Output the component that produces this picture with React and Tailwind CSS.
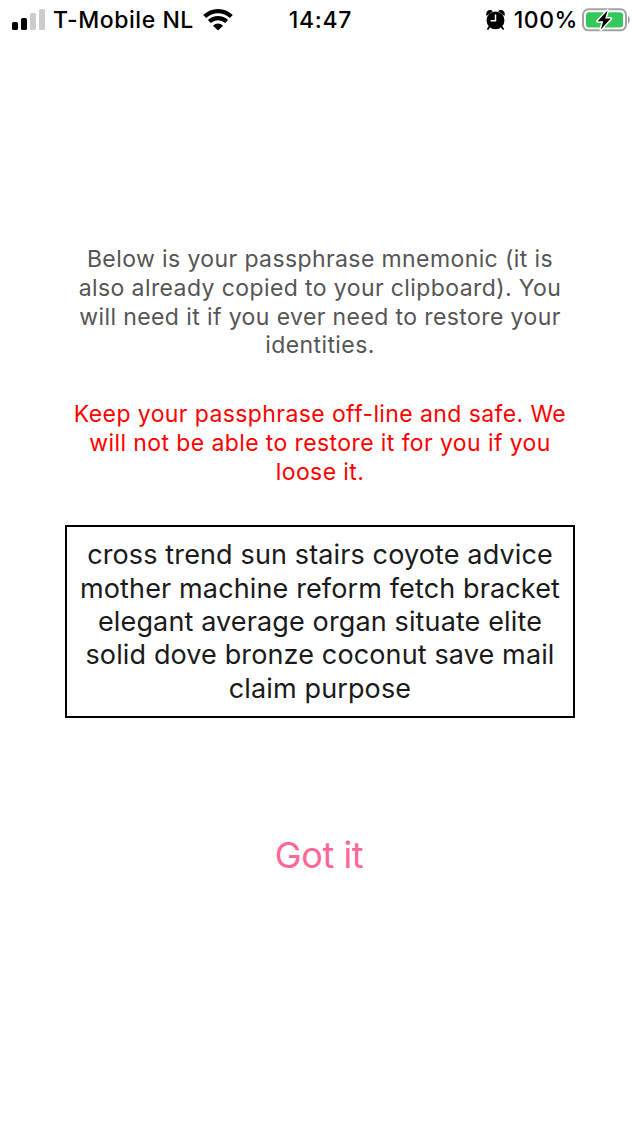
const introLines = [
  "Below is your passphrase mnemonic (it is",
  "also already copied to your clipboard). You",
  "will need it if you ever need to restore your",
  "identities.",
];
const warningLines = [
  "Keep your passphrase off-line and safe. We",
  "will not be able to restore it for you if you",
  "loose it.",
];
const phraseLines = [
  "cross trend sun stairs coyote advice",
  "mother machine reform fetch bracket",
  "elegant average organ situate elite",
  "solid dove bronze coconut save mail",
  "claim purpose",
];

function Lines({ items }) {
  return items.map((line) => (
    <p key={line} className="whitespace-nowrap">{line}</p>
  ));
}

function SignalIcon() {
  return (
    <svg className="h-[22px] w-[33px] shrink-0" viewBox="0 0 33 22">
      <rect x="0" y="13" width="6" height="8" rx="1.6" />
      <rect x="9" y="9" width="6" height="12" rx="1.6" />
      <rect x="18" y="4" width="6" height="17" rx="1.6" fill="#ccc" />
      <rect x="27" y="0" width="6" height="21" rx="1.6" fill="#ccc" />
    </svg>
  );
}

function WifiIcon() {
  return (
    <svg className="h-[22px] w-[30px] shrink-0" viewBox="0 0 30 22" fill="none" stroke="#000">
      <path d="M1.7 7.6A18.9 18.9 0 0 1 28.3 7.6" strokeWidth="4.2" />
      <path d="M6.4 12.6A12.2 12.2 0 0 1 23.6 12.6" strokeWidth="4.2" />
      <path d="M15 21.6L10 16.7A7 7 0 0 1 20 16.7Z" fill="#000" stroke="none" />
    </svg>
  );
}

function AlarmIcon() {
  return (
    <svg className="h-[21px] w-[19px] shrink-0" viewBox="0 0 19 21">
      <path d="M0.6 6C-0.6 3 1.2 0 4 0C5.2 0 6.2 0.5 6.8 1.3Z" />
      <path d="M18.4 6C19.6 3 17.8 0 15 0C13.8 0 12.8 0.5 12.2 1.3Z" />
      <circle cx="9.5" cy="10.4" r="8.9" />
      <path d="M3.8 16L1.9 18.9M15.2 16L17.1 18.9" stroke="#000" strokeWidth="1.8" strokeLinecap="round" />
      <path d="M9.5 4.9V10.8H5.2" fill="none" stroke="#fff" strokeWidth="1.5" strokeLinecap="round" />
    </svg>
  );
}

function BatteryIcon() {
  return (
    <svg className="h-[24px] w-[50px] shrink-0" viewBox="0 0 50 24">
      <rect x="1" y="1.3" width="43" height="21" rx="5.5" fill="none" stroke="#a3a3a3" strokeWidth="2" />
      <path d="M46 8C48.4 9 48.4 14.6 46 15.6Z" fill="#a3a3a3" />
      <rect x="4" y="4.2" width="37" height="15.2" rx="3" fill="#34c759" />
      <path d="M25.6 2.6L15.6 13.2H21.2L18.8 21.4L28.8 10.6H23.2Z" fill="#000" stroke="#fff" strokeWidth="3" paintOrder="stroke" strokeLinejoin="round" />
    </svg>
  );
}

export default function App() {
  return (
    <main className="flex h-[1136px] w-[640px] flex-col bg-white font-['Inter',sans-serif]">
      <header className="grid h-10 grid-cols-[1fr_auto_1fr] items-center pr-2 pl-3 text-[23px] font-medium text-black">
        <div className="flex items-center">
          <SignalIcon />
          <span className="ml-2 tracking-[0.55px] whitespace-nowrap">T-Mobile NL</span>
          <span className="ml-[9px] flex"><WifiIcon /></span>
        </div>
        <span className="pr-[3px] tracking-[0.7px]">14:47</span>
        <div className="flex items-center justify-end">
          <AlarmIcon />
          <span className="mr-[4px] ml-[9px] tracking-[0.55px]">100%</span>
          <BatteryIcon />
        </div>
      </header>
      <section className="mt-[205.2px] flex flex-col items-center text-[23px] leading-[28.7px] tracking-[0.4px] text-[#555]">
        <Lines items={introLines} />
      </section>
      <section className="mt-[40.2px] flex flex-col items-center text-[23px] leading-[28.7px] tracking-[0.4px] text-[#f00]">
        <Lines items={warningLines} />
      </section>
      <section className="mx-[65px] mt-[38.9px] flex h-[193px] flex-col items-center justify-center border-2 border-black text-[27px] leading-[33.4px] tracking-[0.13px] text-[#1a1a1a]">
        <Lines items={phraseLines} />
      </section>
      <button className="mt-[110px] pr-[2px] text-[36px] tracking-[-0.4px] text-[#ff6699]">Got it</button>
    </main>
  );
}
